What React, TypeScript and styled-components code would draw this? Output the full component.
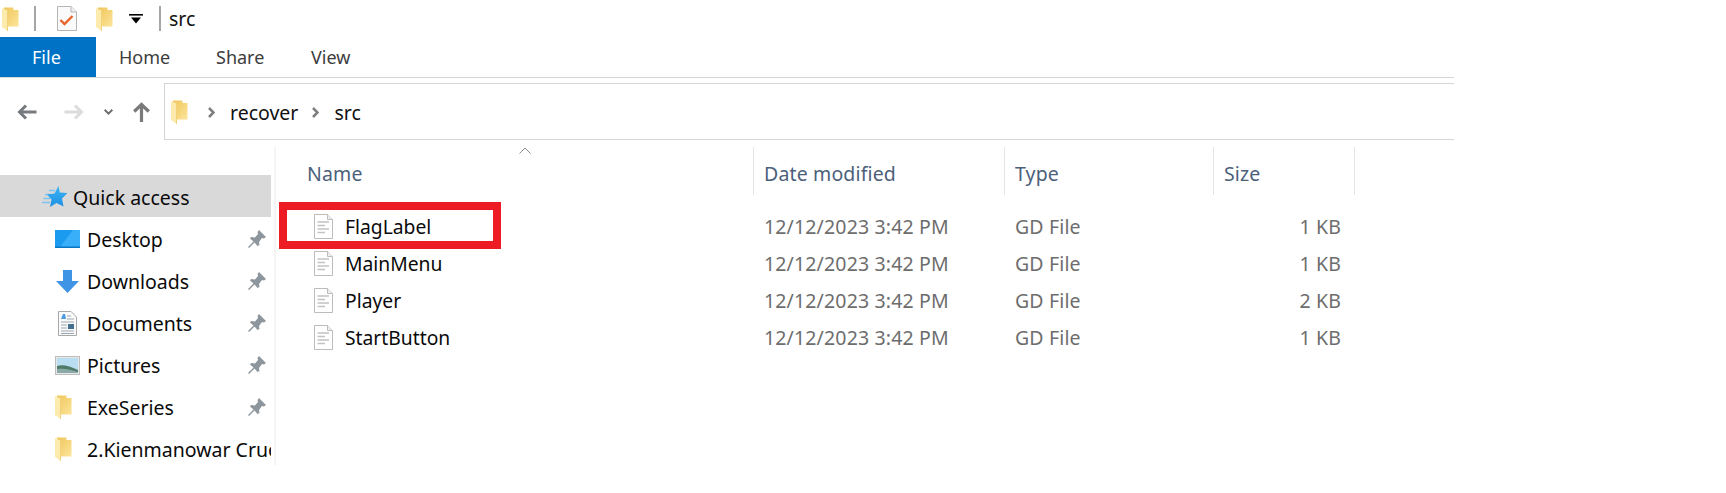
import React from "react";
import styled, { createGlobalStyle } from "styled-components";

const Global = createGlobalStyle`
  html, body { margin: 0; padding: 0; background: #fff; }
  body { font-family: "Noto Sans", "Open Sans", "Liberation Sans", sans-serif; font-size: 19.5px; color: #000; }
`;

const Frame = styled.div`
  width: 1454px;
  height: 493px;
  display: flex;
  flex-direction: column;
  overflow: hidden;
`;
const TitleBar = styled.div`
  height: 37px;
  display: flex;
  align-items: center;
  padding-left: 2px;
  box-sizing: border-box;
`;
const TitleSep = styled.span<{ $ml: number; $mr: number }>`
  width: 2px;
  height: 25px;
  background: #a6a6a6;
  margin-left: ${(p) => p.$ml}px;
  margin-right: ${(p) => p.$mr}px;
`;
const Spacer = styled.span<{ $w: number }>`
  width: ${(p) => p.$w}px;
  flex: none;
`;
const TitleText = styled.span`
  font-size: 19.5px;
  line-height: 37px;
  color: #111;
`;
const TabBar = styled.div`
  height: 41px;
  display: flex;
  box-sizing: border-box;
  border-bottom: 1px solid #d5d5d5;
`;
const FileTab = styled.div`
  width: 96px;
  height: 40px;
  background: #0072c6;
  color: #fff;
  font-size: 18px;
  line-height: 40px;
  padding-left: 32px;
  box-sizing: border-box;
`;
const Tab = styled.div<{ $w: number }>`
  width: ${(p) => p.$w}px;
  font-size: 18px;
  line-height: 40px;
  color: #3c3c3c;
`;
const TabList = styled.div`
  display: flex;
  padding-left: 23px;
`;
const NavBar = styled.div`
  height: 69px;
  display: flex;
  align-items: flex-start;
  padding-top: 5px;
  box-sizing: border-box;
`;
const NavButtons = styled.div`
  width: 164px;
  height: 57px;
  flex: none;
  display: flex;
  align-items: center;
`;
const AddressBox = styled.div`
  flex: 1;
  height: 57px;
  box-sizing: border-box;
  border: 1px solid #d5d5d5;
  border-right: none;
  display: flex;
  align-items: center;
  padding: 1px 0 0 6px;
  font-size: 19.5px;
`;
const Crumb = styled.span<{ $ml: number }>`
  margin-left: ${(p) => p.$ml}px;
  color: #111;
`;
const Main = styled.div`
  flex: 1;
  display: flex;
  align-items: flex-start;
`;
const Sidebar = styled.div`
  width: 276px;
  height: 318px;
  flex: none;
  box-sizing: border-box;
  padding-top: 28px;
  border-right: 2px solid #f4f4f4;
`;
const SideRow = styled.div<{ $active?: boolean }>`
  width: 271px;
  height: 42px;
  display: flex;
  align-items: center;
  box-sizing: border-box;
  padding: 2px 0 0 ${(p) => (p.$active ? 42 : 55)}px;
  background: ${(p) => (p.$active ? "#d9d9d9" : "transparent")};
  font-size: 19.5px;
  white-space: nowrap;
  overflow: hidden;
  color: #0a0a0a;
`;
const SideIcon = styled.span<{ $w: number }>`
  width: ${(p) => p.$w}px;
  flex: none;
  display: flex;
  align-items: center;
`;
const SideLabel = styled.span`
  flex: 1;
`;
const PinWrap = styled.span`
  width: 23px;
  flex: none;
  display: flex;
`;
const Content = styled.div`
  flex: 1;
  position: relative;
`;
const HeaderRow = styled.div`
  height: 48px;
  display: grid;
  grid-template-columns: 478px 251px 209px 141px;
  position: relative;
`;
const HeaderCell = styled.div<{ $first?: boolean }>`
  box-sizing: border-box;
  padding: 3px 0 0 ${(p) => (p.$first ? 31 : 10)}px;
  border-right: 1px solid #e5e5e5;
  font-size: 19.5px;
  letter-spacing: 0.15px;
  line-height: 48px;
  height: 48px;
  color: #4c607a;
`;
const SortCaret = styled.span`
  position: absolute;
  left: 243px;
  top: 0;
  display: flex;
`;
const Rows = styled.div`
  margin-top: 13px;
`;
const FileRow = styled.div`
  height: 37px;
  display: grid;
  grid-template-columns: 478px 251px 209px 141px;
  align-items: center;
  position: relative;
  font-size: 19.5px;
  letter-spacing: 0.15px;
  color: #6d6d6d;
`;
const NameCell = styled.div`
  display: flex;
  align-items: center;
  padding-left: 38px;
  color: #0a0a0a;
  letter-spacing: 0;
  font-size: 19.3px;
`;
const FileGlyph = styled.span`
  width: 31px;
  flex: none;
  display: flex;
`;
const DateCell = styled.div`
  padding-left: 10px;
`;
const SizeCell = styled.div`
  text-align: right;
  padding-right: 14px;
`;
const Highlight = styled.div`
  position: absolute;
  left: 3px;
  top: -6px;
  width: 222px;
  height: 47px;
  box-sizing: border-box;
  border: 8px solid #ed1c24;
`;
const Svg = styled.svg<{ $ml?: number }>`
  flex: none;
  margin-left: ${(p) => p.$ml ?? 0}px;
`;

const FolderIcon = ({ id }: { id: string }) => (
  <Svg width="17" height="24" viewBox="0 0 17 24">
    <defs>
      <linearGradient id={id} x1="0" y1="0" x2="1" y2="1">
        <stop offset="0" stopColor="#efc55a" />
        <stop offset="1" stopColor="#fce59a" />
      </linearGradient>
    </defs>
    <path d="M2 0.500H11.500V3H16.500V19.500H2Z" fill={`url(#${id})`} />
    <path d="M0 1L5.500 3.500V24L1 20.500H0Z" fill="#fdebad" />
    <path d="M5.500 3.500V24" stroke="#f1d27a" strokeWidth="1" />
  </Svg>
);
const CheckDoc = () => (
  <Svg width="20" height="25" viewBox="0 0 20 25">
    <path d="M.5.5H14L19.500 6V24.500H.5Z" fill="#fafafa" stroke="#b5b5b5" />
    <path d="M14 .5V6H19.500" fill="#eee" stroke="#b5b5b5" />
    <path d="M3.500 14L7.500 18L15.500 10" fill="none" stroke="#e9632a" strokeWidth="2.400" />
  </Svg>
);
const Dropdown = () => (
  <Svg width="14" height="10" viewBox="0 0 14 10">
    <rect x="0" y="0" width="14" height="1.600" fill="#000" />
    <path d="M2 3.500H12L7 9.500Z" fill="#000" />
  </Svg>
);
const Arrow = ({ dir, color, ml }: { dir: "l" | "r"; color: string; ml: number }) => (
  <Svg $ml={ml} width="20" height="16" viewBox="0 0 20 16">
    <path
      d={dir === "l" ? "M19.500 8H2.500M9 1.500L2.500 8L9 14.500" : "M.5 8H17.500M11 1.500L17.500 8L11 14.500"}
      fill="none"
      stroke={color}
      strokeWidth="3"
    />
  </Svg>
);
const Chevron = ({ ml }: { ml: number }) => (
  <Svg $ml={ml} width="9" height="6" viewBox="0 0 9 6">
    <path d="M.7 .8L4.500 4.600L8.300 .8" fill="none" stroke="#6e6e6e" strokeWidth="2" />
  </Svg>
);
const Up = ({ ml }: { ml: number }) => (
  <Svg $ml={ml} width="17" height="20" viewBox="0 0 17 20">
    <path d="M8.500 20V2.500M1.200 9.500L8.500 2.500L15.800 9.500" fill="none" stroke="#7a7a7a" strokeWidth="3.200" />
  </Svg>
);
const Crumbarrow = ({ ml }: { ml: number }) => (
  <Svg $ml={ml} width="7" height="11" viewBox="0 0 7 11">
    <path d="M1 1L5.500 5.500L1 10" fill="none" stroke="#7f7f7f" strokeWidth="2.600" />
  </Svg>
);
const Star = () => (
  <Svg width="26" height="22" viewBox="0 0 26 22">
    <defs>
      <linearGradient id="starFill" x1="0" y1="0" x2="0" y2="1">
        <stop offset="0" stopColor="#3db4f5" />
        <stop offset="1" stopColor="#1e8fe3" />
      </linearGradient>
    </defs>
    <path d="M0 16.500H8M1.500 12.500H8M3 8.500H9M7 4.500H13" stroke="#7cc4f2" strokeWidth="1.300" />
    <path d="M16.500 0L17.800 6.500L25.500 7L20 12.500L21.500 20.500L14.500 17L8 21L9.500 13.500L5 8.500L12.500 7.500Z" fill="url(#starFill)" />
  </Svg>
);
const DesktopIcon = () => (
  <Svg width="25" height="18" viewBox="0 0 25 18">
    <rect x="0" y="0" width="25" height="18" fill="#1a9bf0" />
    <path d="M5 17L18 0H25V17Z" fill="#38aff8" />
    <rect x="0" y="16.500" width="25" height="1.500" fill="#0b76c4" />
  </Svg>
);
const DownloadIcon = () => (
  <Svg $ml={1} width="23" height="23" viewBox="0 0 23 23">
    <path d="M7 0H16V11H23L11.500 23L0 11H7Z" fill="#3f94e6" />
  </Svg>
);
const DocsIcon = () => (
  <Svg $ml={3} width="19" height="25" viewBox="0 0 19 25">
    <path d="M.5.5H13L18.500 6V24.500H.5Z" fill="#fbfbfb" stroke="#a9a9a9" />
    <path d="M3 8L5 3H7L8 8" fill="#4d9be0" />
    <path d="M9 5H13M9 8H16M3 11H16M3 14H9M3 17H9M3 20H16M3 22.500H16" stroke="#9aa7b3" strokeWidth="1" />
    <rect x="10" y="13" width="6" height="5" fill="#44708f" />
  </Svg>
);
const PicturesIcon = () => (
  <Svg width="25" height="19" viewBox="0 0 25 19">
    <rect x=".5" y=".5" width="24" height="18" fill="#e8e8e8" stroke="#bdbdbd" />
    <rect x="2" y="2" width="21" height="15" fill="#b9ddf1" />
    <path d="M2 10C8 8 14 10 23 14V17H2Z" fill="#4f7a67" />
    <path d="M2 13C10 12 16 14 23 16V17H2Z" fill="#8aa9a8" />
  </Svg>
);
const Pin = () => (
  <Svg width="18" height="18" viewBox="0 0 18 18">
    <path d="M11 0L18 7L16 8.500L14 8L11 12L11.500 15L9.500 16L6.500 12.500L1 18L0 17L5.500 11.500L2 8.500L3 7L7 7.500L10 4L9.500 2Z" fill="#8d969d" />
  </Svg>
);
const FileIcon = () => (
  <Svg width="19" height="25" viewBox="0 0 19 25">
    <path d="M.5.5H13.500L18.500 5.500V24.500H.5Z" fill="#fff" stroke="#bcbcbc" />
    <path d="M13.500.5V5.500H18.500" fill="#efefef" stroke="#bcbcbc" />
    <path d="M3.500 8H15M3.500 11.500H11M3.500 15H15M3.500 18.500H11" stroke="#c2c2c2" strokeWidth="1.600" />
  </Svg>
);
const Caret = () => (
  <Svg width="12" height="7" viewBox="0 0 12 7">
    <path d="M.5 6.500L6 1L11.500 6.500" fill="none" stroke="#8c8c8c" strokeWidth="1" />
  </Svg>
);

const side = [
  { label: "Desktop", icon: <DesktopIcon />, pin: true },
  { label: "Downloads", icon: <DownloadIcon />, pin: true },
  { label: "Documents", icon: <DocsIcon />, pin: true },
  { label: "Pictures", icon: <PicturesIcon />, pin: true },
  { label: "ExeSeries", icon: <FolderIcon id="f4" />, pin: true },
  { label: "2.Kienmanowar Cruelloader", icon: <FolderIcon id="f5" />, pin: false },
];
const files = [
  { name: "FlagLabel", size: "1 KB" },
  { name: "MainMenu", size: "1 KB" },
  { name: "Player", size: "2 KB" },
  { name: "StartButton", size: "1 KB" },
];

export default function App() {
  return (
    <Frame>
      <Global />
      <TitleBar>
        <FolderIcon id="f1" />
        <TitleSep $ml={15} $mr={21} />
        <CheckDoc />
        <Spacer $w={19} />
        <FolderIcon id="f2" />
        <Spacer $w={16} />
        <Dropdown />
        <TitleSep $ml={16} $mr={8} />
        <TitleText>src</TitleText>
      </TitleBar>
      <TabBar>
        <FileTab>File</FileTab>
        <TabList>
          <Tab $w={97}>Home</Tab>
          <Tab $w={95}>Share</Tab>
          <Tab $w={80}>View</Tab>
        </TabList>
      </TabBar>
      <NavBar>
        <NavButtons>
          <Arrow dir="l" color="#767b80" ml={17} />
          <Arrow dir="r" color="#dcdcdc" ml={27} />
          <Chevron ml={20} />
          <Up ml={20} />
        </NavButtons>
        <AddressBox>
          <FolderIcon id="f3" />
          <Crumbarrow ml={20} />
          <Crumb $ml={15}>recover</Crumb>
          <Crumbarrow ml={14} />
          <Crumb $ml={15}>src</Crumb>
        </AddressBox>
      </NavBar>
      <Main>
        <Sidebar>
          <SideRow $active>
            <SideIcon $w={31}><Star /></SideIcon>
            <SideLabel>Quick access</SideLabel>
          </SideRow>
          {side.map((s) => (
            <SideRow key={s.label}>
              <SideIcon $w={32}>{s.icon}</SideIcon>
              <SideLabel>{s.label}</SideLabel>
              {s.pin && <PinWrap><Pin /></PinWrap>}
            </SideRow>
          ))}
        </Sidebar>
        <Content>
          <HeaderRow>
            <HeaderCell $first>Name</HeaderCell>
            <HeaderCell>Date modified</HeaderCell>
            <HeaderCell>Type</HeaderCell>
            <HeaderCell>Size</HeaderCell>
            <SortCaret><Caret /></SortCaret>
          </HeaderRow>
          <Rows>
            {files.map((f, i) => (
              <FileRow key={f.name}>
                <NameCell>
                  <FileGlyph><FileIcon /></FileGlyph>
                  {f.name}
                </NameCell>
                <DateCell>12/12/2023 3:42 PM</DateCell>
                <DateCell>GD File</DateCell>
                <SizeCell>{f.size}</SizeCell>
                {i === 0 && <Highlight />}
              </FileRow>
            ))}
          </Rows>
        </Content>
      </Main>
    </Frame>
  );
}
